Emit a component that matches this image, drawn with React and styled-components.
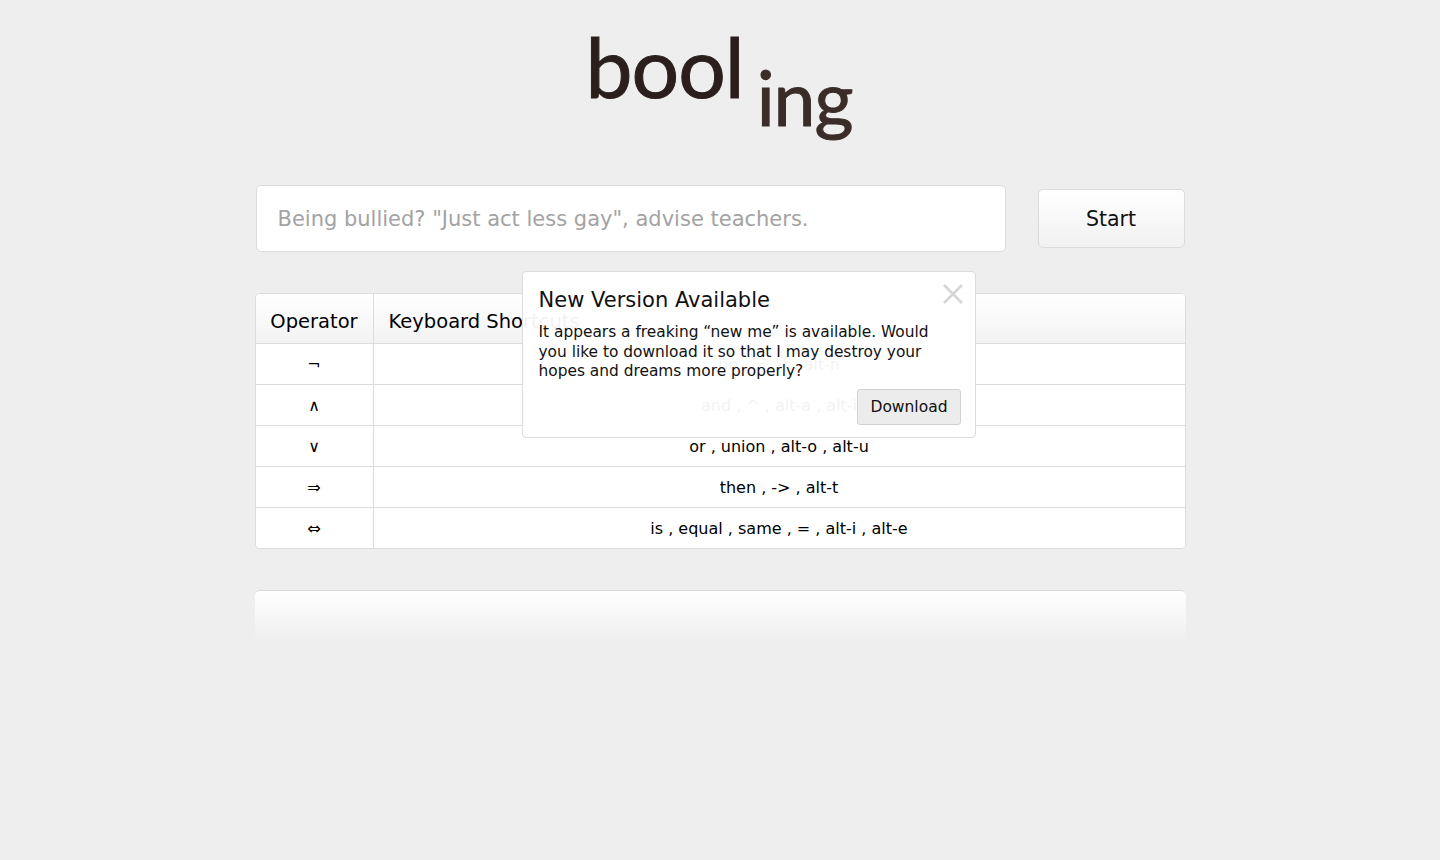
import React from "react";
import styled, { createGlobalStyle } from "styled-components";

const GlobalStyle = createGlobalStyle`
  html, body {
    margin: 0;
    padding: 0;
    background: #eeeeee;
  }
  body {
    font-family: "DejaVu Sans", "Open Sans", sans-serif;
    color: #111;
  }
`;

const Page = styled.div`
  width: 931px;
  margin: 0 auto;
  padding-top: 20px;
  padding-bottom: 60px;
`;

const Logo = styled.h1`
  margin: 0;
  height: 165px;
  display: flex;
  justify-content: center;
  align-items: flex-start;
  padding-right: 2px;
  font-family: "Lato", "Noto Sans", sans-serif;
  font-weight: 400;
  letter-spacing: -1px;
  line-height: 1;
`;

const LogoPart = styled.span`
  font-size: ${(p) => p.size}px;
  color: ${(p) => p.color};
  margin-top: ${(p) => p.offset}px;
  margin-left: ${(p) => p.gap || 0}px;
  -webkit-text-stroke: 1px ${(p) => p.color};
`;

const SearchRow = styled.div`
  display: flex;
  align-items: center;
  margin-left: 1px;
`;

const SearchInput = styled.input`
  width: 750px;
  height: 67px;
  box-sizing: border-box;
  border: 1px solid #dcdcdc;
  border-radius: 5px;
  background: #fff;
  padding: 0 21px;
  font-family: inherit;
  font-size: 21px;
  color: #333;
  outline: none;
  &::placeholder {
    color: #a3a3a3;
  }
`;

const StartButton = styled.button`
  margin-left: auto;
  margin-right: 1px;
  width: 147px;
  height: 59px;
  border: 1px solid #dcdcdc;
  border-radius: 5px;
  background: linear-gradient(#ffffff, #f1f1f1);
  font-family: inherit;
  font-size: 20.5px;
  color: #111;
`;

const TableWrap = styled.div`
  position: relative;
  margin-top: 41px;
`;

const Table = styled.div`
  border: 1px solid #dcdcdc;
  border-radius: 5px;
  background: #fff;
  overflow: hidden;
`;

const Row = styled.div`
  display: grid;
  grid-template-columns: 117px 1fr;
  height: ${(p) => (p.head ? 49 : 40)}px;
  border-top: ${(p) => (p.head ? "none" : "1px solid #dcdcdc")};
  background: ${(p) => (p.head ? "linear-gradient(#ffffff, #f3f3f3)" : "#fff")};
  font-size: ${(p) => (p.head ? 19.5 : 16)}px;
`;

const Cell = styled.div`
  display: flex;
  align-items: center;
  justify-content: ${(p) => (p.left ? "flex-start" : "center")};
  padding-left: ${(p) => (p.left ? 15 : 0)}px;
  border-left: ${(p) => (p.first ? "none" : "1px solid #dcdcdc")};
  padding-top: ${(p) => (p.head ? 6 : 0)}px;
  color: #000;
  white-space: nowrap;
`;

const Popup = styled.div`
  position: absolute;
  left: 267px;
  top: -22px;
  width: 454px;
  height: 167px;
  box-sizing: border-box;
  background: rgba(255, 255, 255, 0.95);
  border: 1px solid #dcdcdc;
  border-radius: 4px;
  padding: 14px 16px 0 16px;
`;

const PopupTitle = styled.div`
  font-size: 21px;
  color: #111;
  line-height: 28px;
`;

const PopupText = styled.p`
  margin: 9px 0 0;
  font-size: 15.4px;
  line-height: 19.5px;
  color: #111;
`;

const PopupFooter = styled.div`
  display: flex;
  justify-content: flex-end;
  margin-top: 7px;
  margin-right: -2px;
`;

const DownloadButton = styled.button`
  height: 36px;
  padding: 0 12px;
  border: 1px solid #d2d2d2;
  border-radius: 3px;
  background: #ececec;
  font-family: inherit;
  font-size: 15.5px;
  color: #111;
`;

const CloseButton = styled.button`
  position: absolute;
  top: 10px;
  right: 10px;
  width: 24px;
  height: 24px;
  padding: 0;
  border: none;
  background: none;
`;

const BottomPanel = styled.div`
  margin-top: 41px;
  height: 50px;
  border-top: 1px solid #d8d8d8;
  border-radius: 5px 5px 0 0;
  background: linear-gradient(#ffffff, #eeeeee);
`;

const operators = [
  ["¬", "no , ¬ , ! , alt-n"],
  ["∧", "and , ^ , alt-a , alt-i"],
  ["∨", "or , union , alt-o , alt-u"],
  ["⇒", "then , -> , alt-t"],
  ["⇔", "is , equal , same , = , alt-i , alt-e"],
];

export default function App() {
  return (
    <>
      <GlobalStyle />
      <Page>
        <Logo>
          <LogoPart size={84} color="#2a1f1c" offset={4}>
            bool
          </LogoPart>
          <LogoPart size={75} color="#3a2d29" offset={40} gap={13}>
            ing
          </LogoPart>
        </Logo>

        <SearchRow>
          <SearchInput placeholder={'Being bullied? "Just act less gay", advise teachers.'} />
          <StartButton>Start</StartButton>
        </SearchRow>

        <TableWrap>
          <Table>
            <Row head>
              <Cell first head>Operator</Cell>
              <Cell left head>Keyboard Shortcuts</Cell>
            </Row>
            {operators.map(([op, keys]) => (
              <Row key={op}>
                <Cell first>{op}</Cell>
                <Cell>{keys}</Cell>
              </Row>
            ))}
          </Table>

          <Popup>
            <CloseButton aria-label="close">
              <svg width="24" height="24" viewBox="0 0 24 24">
                <path d="M3 3 L21 21 M21 3 L3 21" stroke="#d6d6d6" strokeWidth="2.6" />
              </svg>
            </CloseButton>
            <PopupTitle>New Version Available</PopupTitle>
            <PopupText>
              It appears a freaking “new me” is available. Would you like to
              download it so that I may destroy your hopes and dreams more
              properly?
            </PopupText>
            <PopupFooter>
              <DownloadButton>Download</DownloadButton>
            </PopupFooter>
          </Popup>
        </TableWrap>

        <BottomPanel />
      </Page>
    </>
  );
}
